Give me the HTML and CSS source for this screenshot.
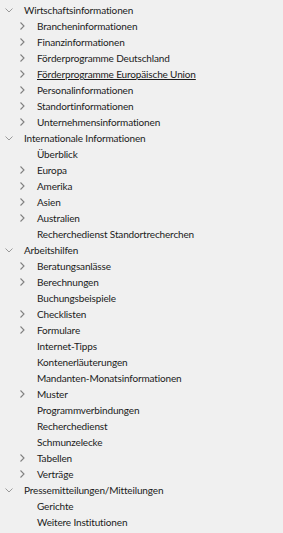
FILE: index.html
```html
<!DOCTYPE html>
<html lang="de">
<head>
    <meta charset="UTF-8">
    <meta name="viewport" content="width=device-width, initial-scale=1.0">
    <title>Navigation</title>
    <link rel="stylesheet" href="styles.css">
</head>
<body>
    <ul class="tree">
        <li class="node open">
            <div class="row top"><svg class="chev" viewBox="0 0 8 5"><path d="M0.5 0.5 L4 4 L7.5 0.5"/></svg><span>Wirtschaftsinformationen</span></div>
            <ul>
                <li class="row sub"><svg class="arrow" viewBox="0 0 5 8"><path d="M0.5 0.5 L4 4 L0.5 7.5"/></svg><span>Brancheninformationen</span></li>
                <li class="row sub"><svg class="arrow" viewBox="0 0 5 8"><path d="M0.5 0.5 L4 4 L0.5 7.5"/></svg><span>Finanzinformationen</span></li>
                <li class="row sub"><svg class="arrow" viewBox="0 0 5 8"><path d="M0.5 0.5 L4 4 L0.5 7.5"/></svg><span>Förderprogramme Deutschland</span></li>
                <li class="row sub hover"><svg class="arrow" viewBox="0 0 5 8"><path d="M0.5 0.5 L4 4 L0.5 7.5"/></svg><span>Förderprogramme Europäische Union</span></li>
                <li class="row sub"><svg class="arrow" viewBox="0 0 5 8"><path d="M0.5 0.5 L4 4 L0.5 7.5"/></svg><span>Personalinformationen</span></li>
                <li class="row sub"><svg class="arrow" viewBox="0 0 5 8"><path d="M0.5 0.5 L4 4 L0.5 7.5"/></svg><span>Standortinformationen</span></li>
                <li class="row sub"><svg class="arrow" viewBox="0 0 5 8"><path d="M0.5 0.5 L4 4 L0.5 7.5"/></svg><span>Unternehmensinformationen</span></li>
            </ul>
        </li>
        <li class="node open">
            <div class="row top"><svg class="chev" viewBox="0 0 8 5"><path d="M0.5 0.5 L4 4 L7.5 0.5"/></svg><span>Internationale Informationen</span></div>
            <ul>
                <li class="row sub leaf"><span>Überblick</span></li>
                <li class="row sub"><svg class="arrow" viewBox="0 0 5 8"><path d="M0.5 0.5 L4 4 L0.5 7.5"/></svg><span>Europa</span></li>
                <li class="row sub"><svg class="arrow" viewBox="0 0 5 8"><path d="M0.5 0.5 L4 4 L0.5 7.5"/></svg><span>Amerika</span></li>
                <li class="row sub"><svg class="arrow" viewBox="0 0 5 8"><path d="M0.5 0.5 L4 4 L0.5 7.5"/></svg><span>Asien</span></li>
                <li class="row sub"><svg class="arrow" viewBox="0 0 5 8"><path d="M0.5 0.5 L4 4 L0.5 7.5"/></svg><span>Australien</span></li>
                <li class="row sub leaf"><span>Recherchedienst Standortrecherchen</span></li>
            </ul>
        </li>
        <li class="node open">
            <div class="row top"><svg class="chev" viewBox="0 0 8 5"><path d="M0.5 0.5 L4 4 L7.5 0.5"/></svg><span>Arbeitshilfen</span></div>
            <ul>
                <li class="row sub"><svg class="arrow" viewBox="0 0 5 8"><path d="M0.5 0.5 L4 4 L0.5 7.5"/></svg><span>Beratungsanlässe</span></li>
                <li class="row sub"><svg class="arrow" viewBox="0 0 5 8"><path d="M0.5 0.5 L4 4 L0.5 7.5"/></svg><span>Berechnungen</span></li>
                <li class="row sub leaf"><span>Buchungsbeispiele</span></li>
                <li class="row sub"><svg class="arrow" viewBox="0 0 5 8"><path d="M0.5 0.5 L4 4 L0.5 7.5"/></svg><span>Checklisten</span></li>
                <li class="row sub"><svg class="arrow" viewBox="0 0 5 8"><path d="M0.5 0.5 L4 4 L0.5 7.5"/></svg><span>Formulare</span></li>
                <li class="row sub leaf"><span>Internet-Tipps</span></li>
                <li class="row sub leaf"><span>Kontenerläuterungen</span></li>
                <li class="row sub leaf"><span>Mandanten-Monatsinformationen</span></li>
                <li class="row sub"><svg class="arrow" viewBox="0 0 5 8"><path d="M0.5 0.5 L4 4 L0.5 7.5"/></svg><span>Muster</span></li>
                <li class="row sub leaf"><span>Programmverbindungen</span></li>
                <li class="row sub leaf"><span>Recherchedienst</span></li>
                <li class="row sub leaf"><span>Schmunzelecke</span></li>
                <li class="row sub"><svg class="arrow" viewBox="0 0 5 8"><path d="M0.5 0.5 L4 4 L0.5 7.5"/></svg><span>Tabellen</span></li>
                <li class="row sub"><svg class="arrow" viewBox="0 0 5 8"><path d="M0.5 0.5 L4 4 L0.5 7.5"/></svg><span>Verträge</span></li>
            </ul>
        </li>
        <li class="node open">
            <div class="row top"><svg class="chev" viewBox="0 0 8 5"><path d="M0.5 0.5 L4 4 L7.5 0.5"/></svg><span>Pressemitteilungen/Mitteilungen</span></div>
            <ul>
                <li class="row sub leaf"><span>Gerichte</span></li>
                <li class="row sub leaf"><span>Weitere Institutionen</span></li>
            </ul>
        </li>
    </ul>
</body>
</html>
```

FILE: styles.css
```css
body {
    margin: 0;
    background-color: #f0f0f0;
    font-family: Lato, "Noto Sans", sans-serif;
    font-size: 10px;
    letter-spacing: -0.15px;
    color: #1b1b1b;
}

.tree,
.tree ul {
    list-style: none;
    margin: 0;
    padding: 0;
}

.tree {
    padding-top: 2px;
}

.row {
    display: flex;
    align-items: center;
    height: 16px;
    white-space: nowrap;
    cursor: default;
}

.top {
    padding-left: 5px;
}

.top span {
    margin-left: 11px;
}

.sub {
    padding-left: 20px;
}

.sub span {
    margin-left: 12px;
}

.sub.leaf span {
    margin-left: 17px;
}

.chev {
    width: 8px;
    height: 5px;
    fill: none;
    stroke: #9a9a9a;
    stroke-width: 1;
}

.arrow {
    width: 5px;
    height: 8px;
    fill: none;
    stroke: #808080;
    stroke-width: 1.1;
}

.hover span {
    text-decoration: underline;
}
```
